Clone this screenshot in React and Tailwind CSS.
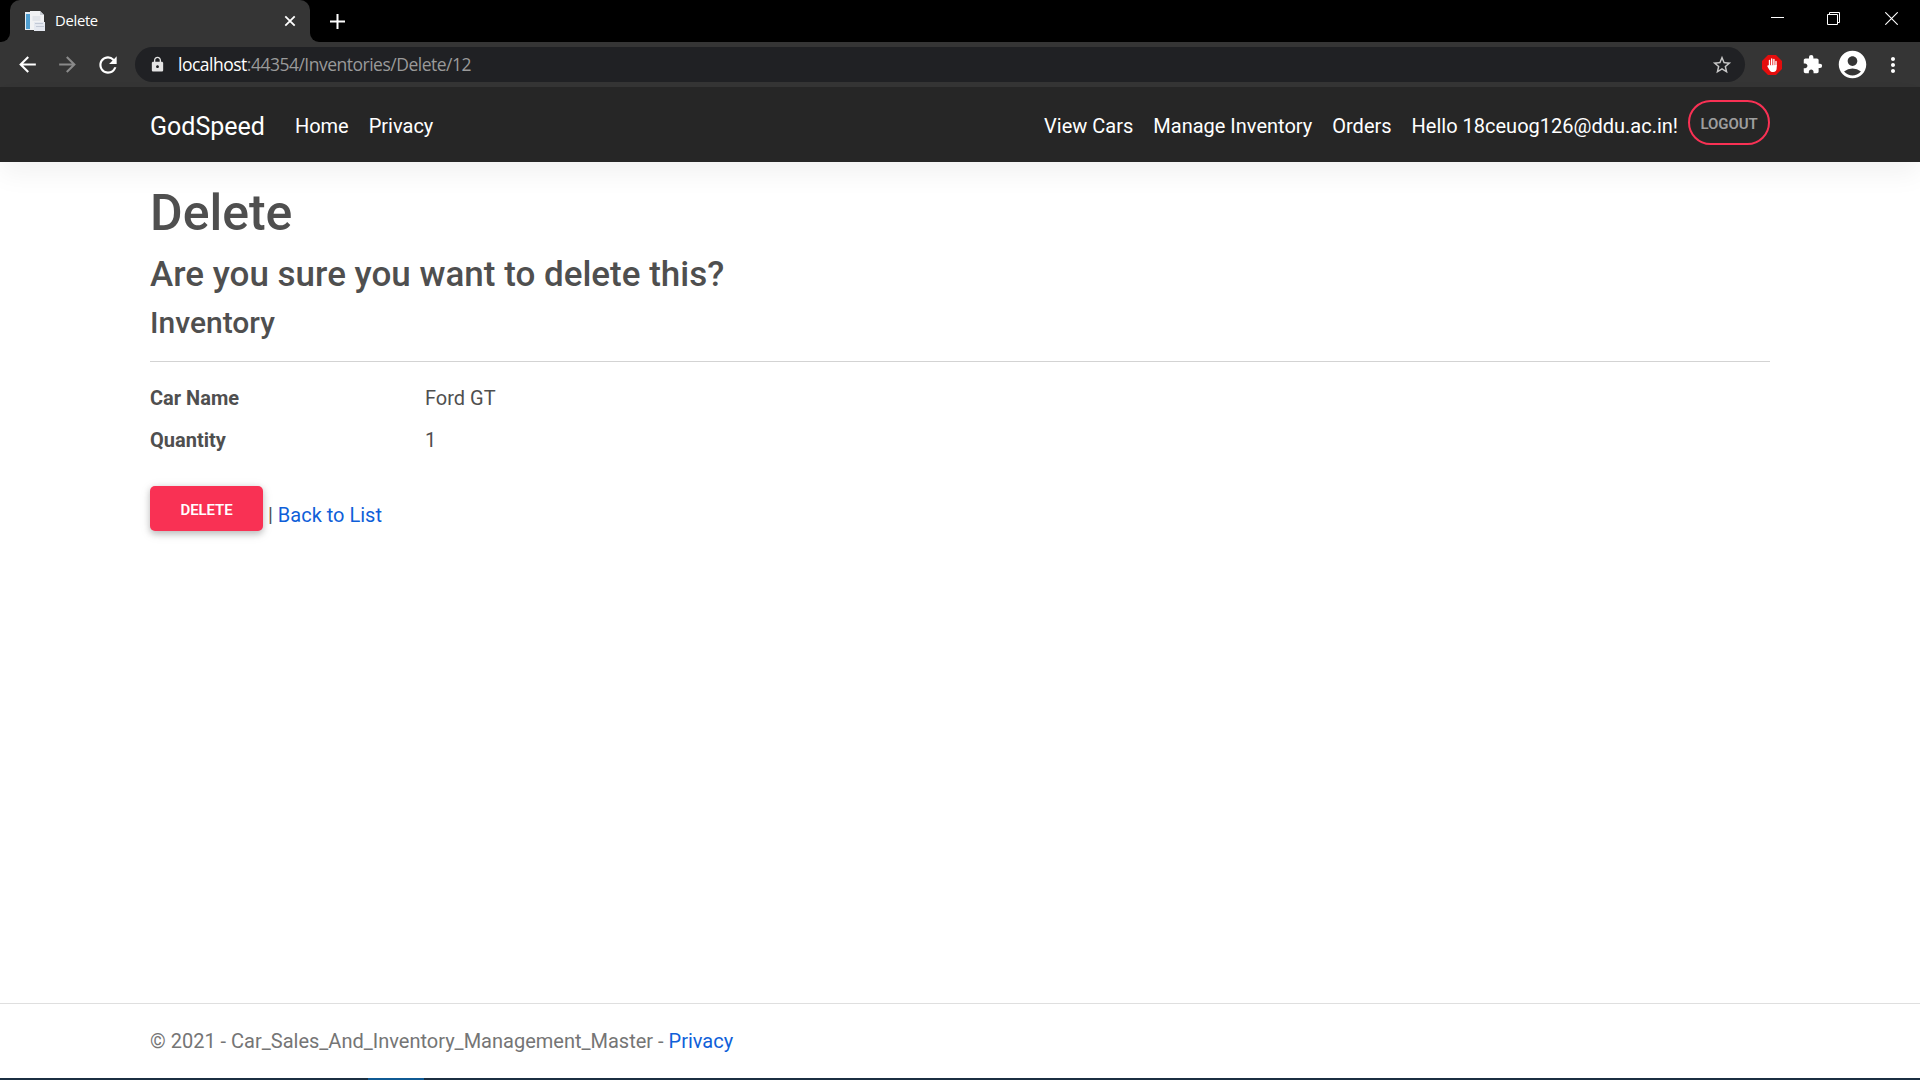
import {
  MdArrowBack,
  MdArrowForward,
  MdRefresh,
  MdLock,
  MdStarBorder,
  MdExtension,
  MdAccountCircle,
  MdMoreVert,
} from "react-icons/md";

function Favicon() {
  return (
    <svg width="20" height="20" viewBox="0 0 20 20" className="shrink-0">
      <rect x="0" y="1" width="12" height="18" fill="#e6edf3" />
      <rect x="1" y="3" width="4" height="15" fill="#4f9ed0" />
      <path d="M5 0h10l4 4v15H5z" fill="#f1f2f4" />
      <path d="M15 0l4 4h-4z" fill="#c9ced4" />
      <path d="M7.500 5h8v5h-8z" fill="#e2e5ea" />
      <path d="M9 11h11v9H9z" fill="#e4e8f0" />
      <path d="M10 12.500h8M11 15.500h8" stroke="#c2c9d6" />
    </svg>
  );
}

function TabStrip() {
  return (
    <div className="flex h-[42px] bg-black">
      <div className="flex w-[10px] bg-[#353535]">
        <div className="w-full rounded-br-[9px] bg-black" />
      </div>
      <div className="flex w-[300px] items-center rounded-t-[10px] bg-[#353535] pl-[15px] pr-[14px]">
        <Favicon />
        <span className="ml-[10px] flex-1 pb-[2px] text-[14.8px] leading-5 tracking-[-0.3px] text-white">Delete</span>
        <svg width="12" height="12" viewBox="0 0 12 12" stroke="#fff" strokeWidth="1.800">
          <path d="M1.300 1.300l9.400 9.400M10.700 1.300L1.300 10.700" />
        </svg>
      </div>
      <div className="flex w-[10px] bg-[#353535]">
        <div className="w-full rounded-bl-[9px] bg-black" />
      </div>
      <div className="flex flex-1 items-center pl-[10px]">
        <svg width="15" height="15" viewBox="0 0 15 15" stroke="#fff" strokeWidth="2">
          <path d="M7.500 0v15M0 7.500h15" />
        </svg>
      </div>
      <div className="flex gap-[43px] pr-[22px] pt-3">
        <svg width="13" height="13" viewBox="0 0 13 13" stroke="#fff">
          <path d="M0 5.500h13" />
        </svg>
        <svg width="13" height="13" viewBox="0 0 13 13" fill="none" stroke="#fff">
          <path d="M.5 2.500h10v10H.5zM2.500 2.500v-2h10v10h-2" />
        </svg>
        <svg width="13" height="13" viewBox="0 0 13 13" stroke="#fff" strokeWidth="1.100" className="ml-[2px]">
          <path d="M.3 .3l12.400 12.400M12.700 .3L.3 12.700" />
        </svg>
      </div>
    </div>
  );
}

function BlockerIcon() {
  return (
    <svg width="20" height="20" viewBox="0 0 20 20" className="shrink-0">
      <path d="M6 0h8l6 6v8l-6 6H6l-6-6V6z" fill="#e40d0d" />
      <path
        d="M7.500 11V5.500M9.700 10V4M11.900 10V4.500M14 11V6.500"
        stroke="#fff"
        strokeWidth="1.400"
        strokeLinecap="round"
      />
      <path
        d="M6.800 10.300l7.900-.3v3c0 2.500-1.300 4-3.500 4-2.100 0-3.200-1-4.100-2.600l-1.700-3c-.3-.8.700-1.300 1.400-1.100z"
        fill="#fff"
      />
    </svg>
  );
}

function Toolbar() {
  return (
    <div className="flex h-[45px] items-center bg-[#353535] pl-[15px] pr-[15px]">
      <MdArrowBack size={25} className="shrink-0 text-white" />
      <MdArrowForward size={25} className="ml-[15px] shrink-0 text-[#8a8a8a]" />
      <MdRefresh size={26} className="ml-[15px] shrink-0 text-white" />
      <div className="ml-[14px] flex h-[35px] flex-1 items-center rounded-full bg-[#202124] pl-[14px] pr-[12px]">
        <MdLock size={17} className="shrink-0 text-[#e4e4e4]" />
        <span className="ml-[12px] flex-1 pb-[2px] text-[17.5px] leading-6 tracking-[-0.5px] text-[#9a9a9a]">
          <span className="text-white">localhost</span>:44354/Inventories/Delete/12
        </span>
        <MdStarBorder size={22} className="text-[#c8c8c8]" />
      </div>
      <div className="ml-[17px] flex items-center">
        <BlockerIcon />
        <MdExtension size={21} className="ml-[20px] text-white" />
        <MdAccountCircle size={33} className="ml-[13px] text-white" />
        <MdMoreVert size={24} className="ml-[12px] text-white" />
      </div>
    </div>
  );
}

function SiteNav() {
  return (
    <header className="relative flex h-[75px] bg-[#262626] px-[150px] text-white shadow-[0_12.5px_25px_0_rgba(0,0,0,0.05)]">
      <nav className="flex flex-1 items-start text-[20px] leading-8">
        <a className="pt-5 text-[25px] leading-10">GodSpeed</a>
        <a className="ml-[30px] pt-[23px]">Home</a>
        <a className="ml-5 pt-[23px]">Privacy</a>
      </nav>
      <nav className="flex items-start text-[20px] leading-8">
        <div className="flex gap-5 pt-[23px]">
          <a>View Cars</a>
          <a>Manage Inventory</a>
          <a>Orders</a>
          <a>Hello 18ceuog126@ddu.ac.in!</a>
        </div>
        <button className="ml-[10px] mt-[13px] h-[45px] w-[82px] rounded-full border-2 border-[#f93154] pt-[2px] text-[15px] font-semibold tracking-[-0.1px] text-[#9e9e9e]">
          LOGOUT
        </button>
      </nav>
    </header>
  );
}

function Field({ label, value }) {
  return (
    <div className="mb-[10px] flex h-8">
      <dt className="w-[275px] font-bold">{label}</dt>
      <dd>{value}</dd>
    </div>
  );
}

export default function App() {
  return (
    <div className="flex h-[1080px] w-[1920px] flex-col overflow-hidden bg-white font-['Open_Sans','Noto_Sans',sans-serif]">
      <TabStrip />
      <Toolbar />
      <div className="flex flex-1 flex-col font-['Roboto',sans-serif] text-[20px] leading-8 text-[#4f4f4f]">
        <SiteNav />
        <main className="flex-1 px-[150px] pt-[21px]">
          <h1 className="mb-[10px] text-[50px] font-medium leading-[60px]">Delete</h1>
          <h3 className="mb-[9px] pt-px text-[35px] font-medium leading-[42px]">
            Are you sure you want to delete this?
          </h3>
          <h4 className="text-[30px] font-medium leading-[35px]">Inventory</h4>
          <hr className="mb-5 mt-[21px] border-[#d3d3d3]" />
          <dl className="mb-[30px]">
            <Field label="Car Name" value="Ford GT" />
            <Field label="Quantity" value="1" />
          </dl>
          <div className="flex">
            <button className="h-[45px] w-[113px] rounded-[5px] bg-[#f93154] pt-[2px] text-[15px] font-semibold tracking-[-0.1px] text-white shadow-[0_2.5px_6px_0_rgba(0,0,0,0.2),0_2.5px_12px_0_rgba(0,0,0,0.1)]">
              DELETE
            </button>
            <span className="ml-[5px] pt-[13px]">
              | <a className="text-[#0f5fd9]">Back to List</a>
            </span>
          </div>
        </main>
        <footer className="h-[75px] border-t border-[#dfdfdf] px-[150px] pt-[21px] text-[#757575]">
          © 2021 - Car_Sales_And_Inventory_Management_Master - <a className="text-[#0f5fd9]">Privacy</a>
        </footer>
      </div>
      <div className="flex h-[2px] bg-[#1b2f42]">
        <div className="ml-[368px] w-[56px] bg-[#0f5a94]" />
      </div>
    </div>
  );
}
